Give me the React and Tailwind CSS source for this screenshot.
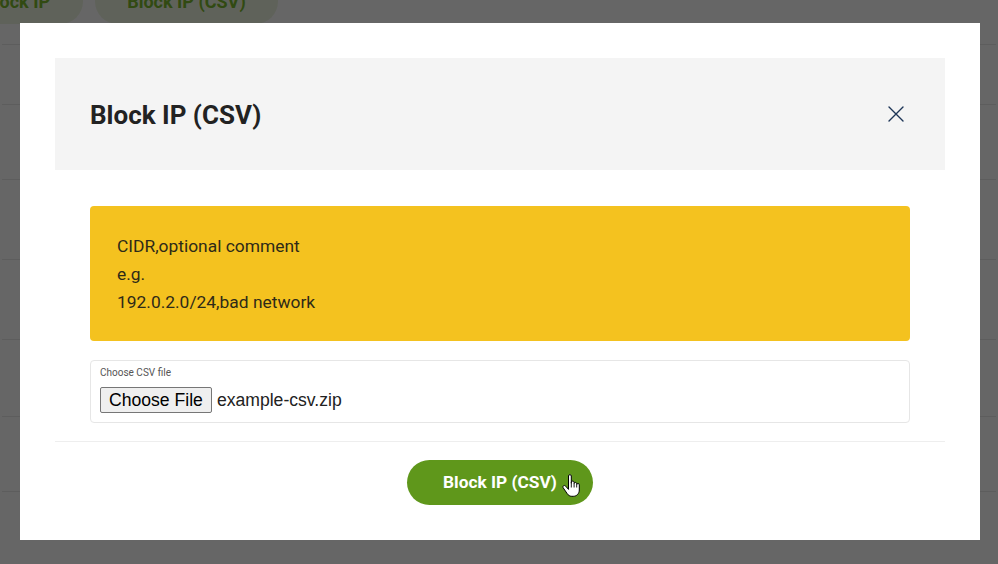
export default function App() {
  const rows = [21, 60, 75, 80, 80, 77, 75];
  return (
    <div className="relative w-[998px] h-[564px] overflow-hidden bg-white" style={{ fontFamily: "Roboto, 'Liberation Sans', sans-serif" }}>
      {/* page underneath */}
      <div className="flex flex-col">
        <div className="flex gap-3 -mt-[21px] -ml-[60px] h-[45px]">
          <div className="h-[45px] w-[143px] rounded-full bg-[#eef6e2] flex items-center justify-end pr-[33px] text-[18px] font-bold text-[#7cb82f]">Block IP</div>
          <div className="h-[45px] w-[183px] rounded-full bg-[#eef6e2] flex items-center justify-center text-[18px] font-bold text-[#7cb82f]">Block IP (CSV)</div>
        </div>
        {rows.map((h, i) => (
          <div key={i} className="border-b border-[#e8e8e8] mx-[2px]" style={{ height: h }} />
        ))}
      </div>

      {/* overlay */}
      <div className="absolute inset-0 bg-black/60 flex justify-center pt-[23px] pl-[2px]">
        <div className="w-[960px] h-[517px] bg-white p-[35px] flex flex-col">
          <div className="h-[112px] bg-[#f4f4f4] flex items-center justify-between px-[35px]">
            <h2 className="text-[26px] font-bold text-[#222] mt-[2px]">Block IP (CSV)</h2>
            <button className="w-[18px] h-[18px] mr-[5px] flex items-center justify-center">
              <svg width="18" height="18" viewBox="0 0 18 18" fill="none" stroke="#1d3557" strokeWidth="1.4" strokeLinecap="round">
                <path d="M2 2L16 16M16 2L2 16" />
              </svg>
            </button>
          </div>

          <div className="px-[35px] pt-[36px]">
            <div className="bg-[#f4c21f] rounded-[4px] px-[27px] pt-[26px] pb-[24px] text-[17.4px] leading-[28px] text-[#2e2a18] h-[135px]">
              <div>CIDR,optional comment</div>
              <div>e.g.</div>
              <div>192.0.2.0/24,bad network</div>
            </div>

            <div className="mt-[19px] h-[63px] border border-[#e6e6e6] rounded-[4px] px-[9px] pt-[6px]">
              <div className="text-[10px] leading-[12px] text-[#555]">Choose CSV file</div>
              <div className="flex items-center mt-[8px]" style={{ fontFamily: "'Liberation Sans', Arial, sans-serif" }}>
                <span className="h-[26px] px-[8px] flex items-center border border-[#767676] rounded-[2px] bg-[#efefef] text-[17.6px] text-black">Choose File</span>
                <span className="ml-[5px] text-[17.6px] text-[#222]">example-csv.zip</span>
              </div>
            </div>
          </div>

          <div className="mt-[18px] border-t border-[#eeeeee]" />

          <div className="flex justify-center pt-[18px]">
            <div className="relative">
              <button className="h-[45px] w-[186px] rounded-full bg-[#5f971b] text-white font-bold text-[17.3px] flex items-center justify-center">
                Block IP (CSV)
              </button>
              <svg className="absolute left-[155px] top-[14px]" width="18" height="23" viewBox="0 0 18 23">
                <path d="M6.5 2c0-.8.6-1.4 1.4-1.4S9.3 1.2 9.3 2v7.2V8.4c0-.8.6-1.3 1.4-1.3s1.4.5 1.4 1.3v1.3c0-.8.6-1.3 1.3-1.3s1.3.5 1.3 1.3v1c0-.7.6-1.2 1.3-1.2s1.3.5 1.3 1.2V16c0 3.5-2.5 6.3-6 6.3H9.8c-2 0-3.5-1-4.5-2.5L1.2 13.8c-.5-.8-.3-1.7.4-2.1.7-.4 1.6-.2 2.1.5l2.8 3.2Z" fill="white" stroke="black" strokeWidth="1" strokeLinejoin="round" />
                <path d="M9.3 9v4.5M12.1 10v3.5M14.7 11v2.5" stroke="black" strokeWidth="0.9" />
              </svg>
            </div>
          </div>
        </div>
      </div>
    </div>
  );
}
